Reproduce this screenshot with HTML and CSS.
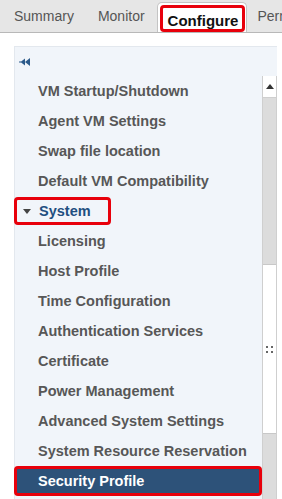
FILE: index.html
```html
<!DOCTYPE html>
<html>
<head>
	<meta charset="utf-8">
	<title>Configure</title>
	<link rel="stylesheet" href="styles.css">
</head>
<body>
	<!--- top tab bar --->
	<div class="tabs">
		<div class="tab">Summary</div>
		<div class="tab">Monitor</div>
		<div class="tab active"><span class="mark">Configure</span></div>
		<div class="tab">Permissions</div>
	</div>
	<div class="content">
		<div class="panel">
			<!--- collapse button --->
			<div class="panel-head">
				<svg width="12" height="8" viewBox="0 0 12 8">
					<rect x="0" y="3.5" width="2" height="1" fill="#2c5a8a"/>
					<polygon points="1.5,4 6,0.5 6,7.5" fill="#2c5a8a"/>
					<polygon points="6,4 11,0 11,8" fill="#2c5a8a"/>
				</svg>
			</div>
			<div class="panel-body">
				<div class="list">
					<div class="item">VM Startup/Shutdown</div>
					<div class="item">Agent VM Settings</div>
					<div class="item">Swap file location</div>
					<div class="item">Default VM Compatibility</div>
					<div class="item group"><span class="mark group-mark"><span class="caret"></span>System</span></div>
					<div class="item">Licensing</div>
					<div class="item">Host Profile</div>
					<div class="item">Time Configuration</div>
					<div class="item">Authentication Services</div>
					<div class="item">Certificate</div>
					<div class="item">Power Management</div>
					<div class="item">Advanced System Settings</div>
					<div class="item">System Resource Reservation</div>
					<div class="item selected">Security Profile</div>
				</div>
				<!--- scrollbar --->
				<div class="scrollbar">
					<div class="sb-btn"><span class="sb-arrow"></span></div>
					<div class="sb-track top"></div>
					<div class="sb-thumb">
						<svg width="7" height="7" viewBox="0 0 7 7">
							<rect x="0" y="0" width="2" height="2" fill="#666"/>
							<rect x="5" y="0" width="2" height="2" fill="#666"/>
							<rect x="0" y="5" width="2" height="2" fill="#666"/>
							<rect x="5" y="5" width="2" height="2" fill="#666"/>
						</svg>
					</div>
					<div class="sb-track"></div>
				</div>
			</div>
		</div>
	</div>
</body>
</html>
```

FILE: styles.css
```css
	body {
		margin: 0;
		background-color: white;
		font-family: "Liberation Sans", Arial, sans-serif;
		overflow: hidden;
	}
	/* tab bar across the top */
	.tabs {
		display: flex;
		align-items: flex-end;
		height: 32px;
		background-color: #e6e6e6;
		border-bottom: 1px solid #b8b8b8;
		padding-left: 14px;
		white-space: nowrap;
		overflow: hidden;
	}
	.tab {
		font-size: 14px;
		color: #555555;
		padding: 0 0 8px 0;
		margin-right: 24px;
	}
	.tab:nth-child(2) {
		margin-right: 12px;
	}
	.tab.active {
		margin: 0 10px -1px 0;
		padding: 2px 1px 0 2px;
		height: 28px;
		background-color: white;
		border: 1px solid #c4c4c4;
		border-bottom: none;
		border-radius: 5px 5px 0 0;
		color: #111;
		font-size: 15px;
		font-weight: bold;
	}
	/* red highlight boxes */
	.mark {
		display: inline-block;
		border: 3px solid #e8000b;
		border-radius: 4px;
	}
	.tab.active .mark {
		padding: 4px 4px 0 5px;
		height: 27px;
		box-sizing: border-box;
	}
	.content {
		padding: 13px 5px 0 14px;
	}
	.panel {
		background-color: #f1f5fa;
		border: 1px solid #e3e8ee;
		border-right: none;
		border-bottom: none;
	}
	.panel-head {
		height: 29px;
		padding-left: 4px;
		display: flex;
		align-items: center;
	}
	.panel-body {
		display: flex;
	}
	.list {
		flex: 1;
	}
	.item {
		height: 30px;
		line-height: 30px;
		padding-left: 23px;
		font-size: 14.5px;
		font-weight: bold;
		color: #575757;
		white-space: nowrap;
	}
	.item.group {
		padding-left: 0;
		color: #1f4f80;
	}
	.group-mark {
		height: 28px;
		line-height: 22px;
		width: 97px;
		box-sizing: border-box;
		margin-left: -1px;
		padding-left: 6px;
	}
	.caret {
		display: inline-block;
		width: 0;
		height: 0;
		border-left: 4px solid transparent;
		border-right: 4px solid transparent;
		border-top: 5px solid #444;
		margin-right: 8px;
		vertical-align: 2px;
	}
	.item.selected {
		background-color: #2d5279;
		color: white;
		border: 3px solid #e8000b;
		border-radius: 4px;
		height: 24px;
		line-height: 24px;
		padding-left: 21px;
		margin-left: -1px;
	}
	/* fake scrollbar on the right */
	.scrollbar {
		width: 13px;
		display: flex;
		flex-direction: column;
		border-left: 1px solid #cfcfcf;
		border-right: 1px solid #cfcfcf;
		background-color: #dcdcdc;
	}
	.sb-btn {
		height: 21px;
		background-color: white;
		border-bottom: 1px solid #cfcfcf;
		display: flex;
		align-items: center;
		justify-content: center;
	}
	.sb-arrow {
		width: 0;
		height: 0;
		border-left: 4px solid transparent;
		border-right: 4px solid transparent;
		border-bottom: 5px solid #333;
	}
	.sb-track {
		height: 70px;
	}
	.sb-track.top {
		height: 166px;
	}
	.sb-thumb {
		height: 168px;
		background-color: white;
		border-top: 1px solid #c8c8c8;
		border-bottom: 1px solid #c8c8c8;
		display: flex;
		align-items: center;
		justify-content: center;
	}
```
